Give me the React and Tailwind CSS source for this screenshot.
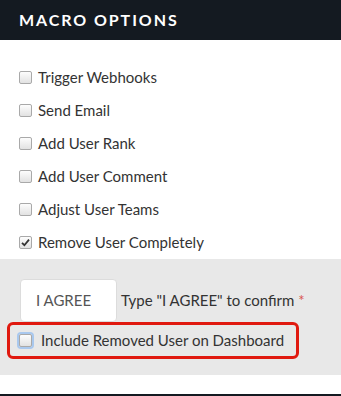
import React from 'react'

function Box({ checked, focus }) {
  return (
    <span
      className={
        'inline-flex items-center justify-center w-[13px] h-[13px] rounded-[2px] border border-[#a9a9a9] bg-gradient-to-b from-[#fdfdfd] to-[#e2e2e2] shrink-0 ' +
        (focus ? 'shadow-[0_0_0_2px_#a9c8ee]' : '')
      }
    >
      {checked && (
        <svg width="9" height="9" viewBox="0 0 9 9">
          <path d="M1 4.8 L3.4 7.2 L8 1.6" fill="none" stroke="#333" strokeWidth="1.8" />
        </svg>
      )}
    </span>
  )
}

export default function App() {
  const options = [
    { label: 'Trigger Webhooks' },
    { label: 'Send Email' },
    { label: 'Add User Rank' },
    { label: 'Add User Comment' },
    { label: 'Adjust User Teams' },
    { label: 'Remove User Completely', checked: true },
  ]

  return (
    <div className="w-[341px] h-[396px] bg-white font-['Lato',sans-serif] text-[#333] flex flex-col">
      {/* Header */}
      <div className="h-[40px] bg-[#141a21] flex items-center pl-[19px] shrink-0">
        <h1 className="text-white text-[16px] font-bold tracking-[0.12em] leading-none">MACRO OPTIONS</h1>
      </div>

      {/* Options */}
      <div className="pt-[21px] flex flex-col">
        {options.map((o) => (
          <label key={o.label} className="h-[33px] flex items-center pl-[19px] gap-[6px] text-[15px]">
            <Box checked={o.checked} />
            <span>{o.label}</span>
          </label>
        ))}
      </div>

      {/* Confirm */}
      <div className="bg-[#e8e8e8] h-[116px] mt-auto pt-[20px] flex flex-col">
        <div className="flex items-center pl-[20px]">
          <div className="w-[97px] h-[43px] bg-white border border-[#dcdcdc] rounded-[4px] flex items-center pl-[15px] text-[15px] text-[#555]">
            I AGREE
          </div>
          <span className="ml-[4px] text-[15px]">
            Type "I AGREE" to confirm <span className="text-[#d9534f]">*</span>
          </span>
        </div>
        <div className="ml-[7px] w-[292px] h-[37px] border-[3px] border-[#e0190f] rounded-[6px] flex items-center pl-[9px] gap-[9px] text-[15px]">
          <Box focus />
          <span>Include Removed User on Dashboard</span>
        </div>
      </div>

      <div className="h-[19px] bg-white shrink-0" />
      <div className="h-[2px] bg-[#141a21] shrink-0" />
    </div>
  )
}
